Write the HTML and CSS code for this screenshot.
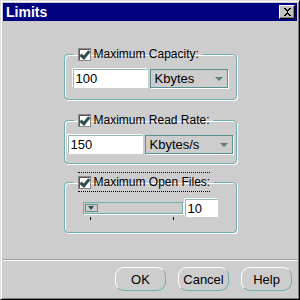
FILE: index.html
```html
<!DOCTYPE html>
<html lang="en">
<head>
  <meta charset="UTF-8">
  <title>Limits</title>
  <link rel="stylesheet" href="styles.css">
</head>
<body>
  <div class="window">
    <div class="titlebar">
      <span class="title">Limits</span>
      <button class="close-button">
        <svg width="9" height="8" viewBox="0 0 9 8"><path d="M1 0h2v1h1v1h1V1h1V0h2v1H7v1H6v1H5v2h1v1h1v1h1v1H6V7H5V6H4v1H3v1H1V7h1V6h1V5h1V3H3V2H2V1H1z" fill="#000"/></svg>
      </button>
    </div>

    <div class="content">
      <fieldset class="group group-capacity">
        <legend><span class="label"><span class="check"></span>Maximum Capacity:</span></legend>
        <div class="row">
          <div class="textbox wide">100</div>
          <div class="combo combo-capacity">Kbytes<span class="arrow"></span></div>
        </div>
      </fieldset>

      <fieldset class="group group-rate">
        <legend><span class="label"><span class="check"></span>Maximum Read Rate:</span></legend>
        <div class="row">
          <div class="textbox wide">150</div>
          <div class="combo combo-rate">Kbytes/s<span class="arrow"></span></div>
        </div>
      </fieldset>

      <fieldset class="group group-files">
        <legend><span class="label focused"><span class="check"></span>Maximum Open Files:</span></legend>
        <div class="row">
          <div class="slider">
            <div class="track"><span class="thumb"><span class="arrow"></span></span></div>
            <div class="ticks"><span></span><span></span></div>
          </div>
          <div class="textbox small">10</div>
        </div>
      </fieldset>
    </div>

    <div class="buttons">
      <button class="push">OK</button>
      <button class="push">Cancel</button>
      <button class="push">Help</button>
    </div>
  </div>
</body>
</html>
```

FILE: styles.css
```css
:root {
  --face: #cdcdcd;
  --teal: #6fb0b0;
  --teal-dark: #5c8f8f;
  --navy: #000080;
}

body {
  margin: 0;
  font-family: 'Liberation Sans', Arial, sans-serif;
  font-size: 12px;
  color: #000;
}

.window {
  width: 300px;
  height: 300px;
  box-sizing: border-box;
  background: var(--face);
  border: 1px solid;
  border-color: #dfdfdf #000 #000 #dfdfdf;
  box-shadow: inset 1px 1px 0 #fff, inset -1px -1px 0 #808080;
  padding: 2px;
  display: flex;
  flex-direction: column;
}

.titlebar {
  height: 18px;
  background: var(--navy);
  display: flex;
  align-items: center;
  justify-content: space-between;
  padding: 0 2px 0 3px;
}

.title {
  color: #fff;
  font-weight: bold;
  font-size: 14px;
}

.close-button {
  width: 16px;
  height: 14px;
  padding: 0;
  background: #c0c0c0;
  border: 1px solid;
  border-color: #fff #000 #000 #fff;
  box-shadow: inset -1px -1px 0 #808080;
  display: flex;
  align-items: center;
  justify-content: center;
}

.content {
  flex: 1;
  display: flex;
  flex-direction: column;
  align-items: center;
  border-bottom: 1px solid #9a9a9a;
  box-shadow: 0 1px 0 #fff;
}

.group {
  width: 173px;
  box-sizing: border-box;
  margin: 0;
  border: 1px solid var(--teal);
  border-radius: 4px;
  box-shadow: 1px 1px 0 #fff inset, 1px 1px 0 #fff;
  padding: 0;
}

.group-capacity { margin-top: 26px; height: 53px; }
.group-rate { margin-top: 13px; height: 51px; }
.group-files { margin-top: 8px; height: 61px; }

legend {
  margin-left: 9px;
  padding: 0 3px 0 4px;
}

.label {
  display: flex;
  align-items: center;
  height: 14px;
  line-height: 14px;
}

.label.focused {
  height: 18px;
  border-top: 1px dotted #000;
  border-bottom: 1px dotted #000;
}

.check {
  width: 11px;
  height: 11px;
  margin-right: 3px;
  background: #fff;
  border: 1px solid #8a8a8a;
  box-shadow: inset 1px 1px 0 #555;
  position: relative;
}

.check::after {
  content: "";
  position: absolute;
  left: 3px;
  top: 0;
  width: 3px;
  height: 7px;
  border: solid #2f4f4f;
  border-width: 0 3px 3px 0;
  transform: rotate(40deg);
}

.row {
  display: flex;
  align-items: flex-start;
  gap: 2px;
}

.group-capacity .row { padding: 8px 0 0 8px; }
.group-rate .row { padding: 8px 0 0 3px; }
.group-files .row { padding: 7px 0 0 18px; }

.textbox {
  height: 19px;
  box-sizing: border-box;
  background: #fff;
  border: 1px solid;
  border-color: #8fb5b5 #fff #fff #8fb5b5;
  box-shadow: -1px -1px 0 #fff;
  padding: 1px 2px;
  font-size: 13px;
  line-height: 16px;
}

.textbox.wide { width: 75px; }
.textbox.small { width: 33px; height: 18px; }

.combo {
  height: 19px;
  box-sizing: border-box;
  border: 1px solid var(--teal-dark);
  box-shadow: 1px 1px 0 #fff;
  padding: 1px 4px;
  font-size: 13px;
  line-height: 16px;
  display: flex;
  justify-content: space-between;
  align-items: center;
}

.combo-capacity { width: 78px; }
.combo-rate { width: 88px; }

.arrow {
  width: 0;
  height: 0;
  border-left: 4px solid transparent;
  border-right: 4px solid transparent;
  border-top: 4px solid #5e7e7e;
}

.slider {
  width: 100px;
  margin-top: 3px;
}

.track {
  height: 12px;
  box-sizing: border-box;
  border: 1px solid var(--teal);
  box-shadow: 1px 1px 0 #fff;
  padding: 1px;
}

.thumb {
  width: 13px;
  height: 8px;
  box-sizing: border-box;
  border: 1px solid var(--teal-dark);
  display: flex;
  align-items: center;
  justify-content: center;
}

.thumb .arrow {
  border-left-width: 3px;
  border-right-width: 3px;
  border-top-width: 4px;
  border-top-color: #2f4f4f;
}

.ticks {
  display: flex;
  justify-content: space-between;
  padding: 3px 9px 0 7px;
}

.ticks span {
  width: 1px;
  height: 3px;
  background: #000;
}

.buttons {
  display: flex;
  justify-content: flex-end;
  gap: 12px;
  padding: 7px 5px 6px 0;
}

.push {
  width: 51px;
  height: 24px;
  background: var(--face);
  border: 1px solid;
  border-color: #fff var(--teal) var(--teal) #fff;
  border-radius: 9px;
  font-family: 'Liberation Sans', Arial, sans-serif;
  font-size: 13px;
  color: #000;
  padding: 0;
}
```
